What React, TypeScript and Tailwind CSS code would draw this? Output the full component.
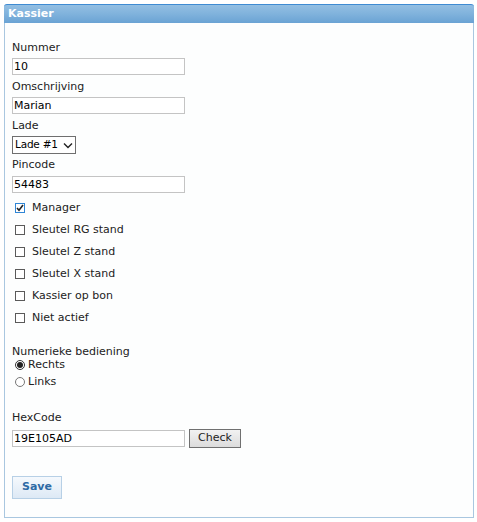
import React from "react";

const font = { fontFamily: '"DejaVu Sans", Verdana, sans-serif' };

function Check({ checked, label }: { checked?: boolean; label: string }) {
  return (
    <div className="flex h-[22px] items-center">
      <span
        className={
          "ml-[3px] flex h-[10px] w-[10px] items-center justify-center border bg-white " +
          (checked ? "border-[#2f86d6]" : "border-[#5a5a5a]")
        }
      >
        {checked && (
          <svg width="8" height="8" viewBox="0 0 8 8">
            <path d="M1 4 L3 6.2 L7 1" fill="none" stroke="#222" strokeWidth="1.6" />
          </svg>
        )}
      </span>
      <span className="ml-[7px] text-[11px] leading-[14px] text-[#222]">{label}</span>
    </div>
  );
}

function Radio({ checked, label }: { checked?: boolean; label: string }) {
  return (
    <div className="flex h-[17px] items-center">
      <span
        className={
          "ml-[3px] flex h-[10px] w-[10px] items-center justify-center rounded-full border bg-white " +
          (checked ? "border-[#333]" : "border-[#777]")
        }
      >
        {checked && <span className="h-[6px] w-[6px] rounded-full bg-[#222]" />}
      </span>
      <span className="ml-[3px] text-[11px] leading-[14px] text-[#222]">{label}</span>
    </div>
  );
}

function Label({ children, className = "" }: { children: React.ReactNode; className?: string }) {
  return <div className={"h-[14px] text-[11px] leading-[14px] text-[#222] " + className}>{children}</div>;
}

function Input({ value, className = "" }: { value: string; className?: string }) {
  return (
    <div
      className={
        "flex h-[17px] w-[173px] items-center border border-[#c4c4c4] bg-white pl-[1px] text-[11px] leading-[14px] text-black " +
        className
      }
    >
      {value}
    </div>
  );
}

export default function App() {
  return (
    <div className="min-h-[522px] w-[477px] bg-white" style={font}>
      <div className="ml-[4px] pt-[4px] w-[470px]">
        <div className="h-[19px] rounded-t-[3px] border-t border-[#3f8bd2] bg-gradient-to-b from-[#93bfe3] via-[#80b2dc] to-[#6aa3d4] pl-[4px] text-[11px] font-bold leading-[17px] text-white">
          Kassier
        </div>
        <div className="flex h-[495px] flex-col border border-t-0 border-[#a9c7e0] bg-[#fdfefe] pl-[7px] pt-[18px]">
          <Label className="mb-[3px]">Nummer</Label>
          <Input value="10" className="mb-[5px]" />
          <Label className="mb-[3px]">Omschrijving</Label>
          <Input value="Marian" className="mb-[5px]" />
          <Label className="mb-[3px]">Lade</Label>
          <div className="mb-[4px] flex h-[18px] w-[64px] items-center justify-between border border-[#6f6f6f] bg-white pl-[2px] pr-[2px] text-[10.5px] tracking-[-0.2px] text-black">
            <span>Lade #1</span>
            <svg width="10" height="7" viewBox="0 0 10 7">
              <path d="M1 1.5 L5 5.5 L9 1.5" fill="none" stroke="#222" strokeWidth="1.4" />
            </svg>
          </div>
          <Label className="mb-[4px]">Pincode</Label>
          <Input value="54483" className="mb-[4px]" />
          <Check checked label="Manager" />
          <Check label="Sleutel RG stand" />
          <Check label="Sleutel Z stand" />
          <Check label="Sleutel X stand" />
          <Check label="Kassier op bon" />
          <Check label="Niet actief" />
          <Label className="mt-[16px]">Numerieke bediening</Label>
          <div className="-mt-[3px]">
            <Radio checked label="Rechts" />
            <Radio label="Links" />
          </div>
          <Label className="mt-[21px] mb-[4px]">HexCode</Label>
          <div className="flex items-start">
            <Input value="19E105AD" className="mt-[1px]" />
            <div className="ml-[4px] flex h-[19px] w-[52px] items-center justify-center border border-[#707070] bg-gradient-to-b from-[#f2f2f2] to-[#dcdcdc] text-[11px] text-[#222]">
              Check
            </div>
          </div>
          <div className="mt-[28px] flex h-[23px] w-[50px] items-center justify-center border border-[#b7d0e6] bg-gradient-to-b from-[#f5f9fd] to-[#dde9f5] text-[11px] font-bold text-[#2d6aa5]">
            Save
          </div>
        </div>
      </div>
    </div>
  );
}
